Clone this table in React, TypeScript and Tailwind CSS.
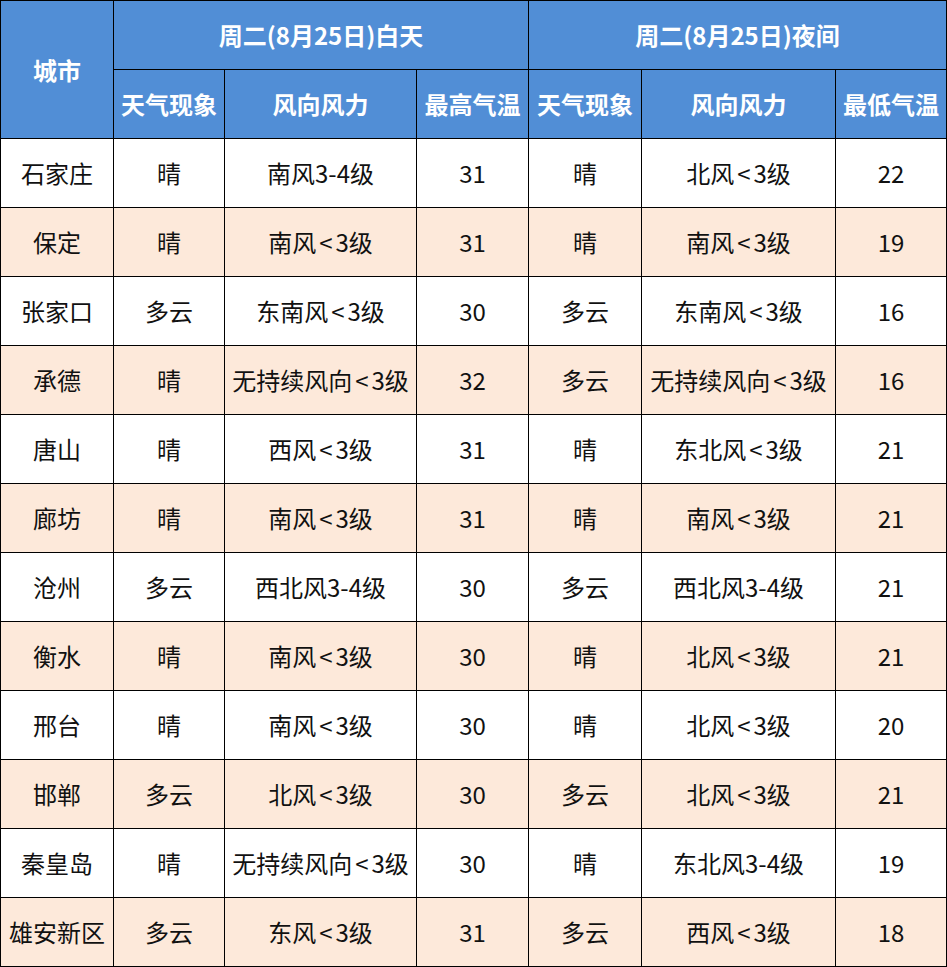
import React from "react"

type Row = [string, string, string, string, string, string, string]

const rows: Row[] = [
  ["石家庄", "晴", "南风3-4级", "31", "晴", "北风<3级", "22"],
  ["保定", "晴", "南风<3级", "31", "晴", "南风<3级", "19"],
  ["张家口", "多云", "东南风<3级", "30", "多云", "东南风<3级", "16"],
  ["承德", "晴", "无持续风向<3级", "32", "多云", "无持续风向<3级", "16"],
  ["唐山", "晴", "西风<3级", "31", "晴", "东北风<3级", "21"],
  ["廊坊", "晴", "南风<3级", "31", "晴", "南风<3级", "21"],
  ["沧州", "多云", "西北风3-4级", "30", "多云", "西北风3-4级", "21"],
  ["衡水", "晴", "南风<3级", "30", "晴", "北风<3级", "21"],
  ["邢台", "晴", "南风<3级", "30", "晴", "北风<3级", "20"],
  ["邯郸", "多云", "北风<3级", "30", "多云", "北风<3级", "21"],
  ["秦皇岛", "晴", "无持续风向<3级", "30", "晴", "东北风3-4级", "19"],
  ["雄安新区", "多云", "东风<3级", "31", "多云", "西风<3级", "18"],
]

const head = "flex items-center justify-center bg-[#518ed6] font-bold text-white"
const cell = "flex items-center justify-center whitespace-nowrap"

// the "<" sits with a little air around it in the source table
function Wind({ text }: { text: string }) {
  const parts = text.split("<")
  if (parts.length === 1) return <>{text}</>
  return (
    <>
      {parts[0]}
      <span className="mx-[3px]">&lt;</span>
      {parts[1]}
    </>
  )
}

export default function App() {
  return (
    <div
      className="w-[947px] bg-white"
      style={{ fontFamily: '"Noto Sans CJK SC", "Noto Sans", sans-serif' }}
    >
      <div className="grid grid-cols-[112px_110px_191px_111px_112px_193px_110px] auto-rows-[68px] gap-px border border-black bg-black text-[24px] text-[#111]">
        <div className={`${head} row-span-2`}>城市</div>
        <div className={`${head} col-span-3`}>周二(8月25日)白天</div>
        <div className={`${head} col-span-3`}>周二(8月25日)夜间</div>
        <div className={head}>天气现象</div>
        <div className={head}>风向风力</div>
        <div className={head}>最高气温</div>
        <div className={head}>天气现象</div>
        <div className={head}>风向风力</div>
        <div className={head}>最低气温</div>
        {rows.map((r, i) =>
          r.map((v, j) => (
            <div
              key={`${i}-${j}`}
              className={`${cell} ${i % 2 === 1 ? "bg-[#fde9da]" : "bg-white"}`}
            >
              <Wind text={v} />
            </div>
          ))
        )}
      </div>
    </div>
  )
}
